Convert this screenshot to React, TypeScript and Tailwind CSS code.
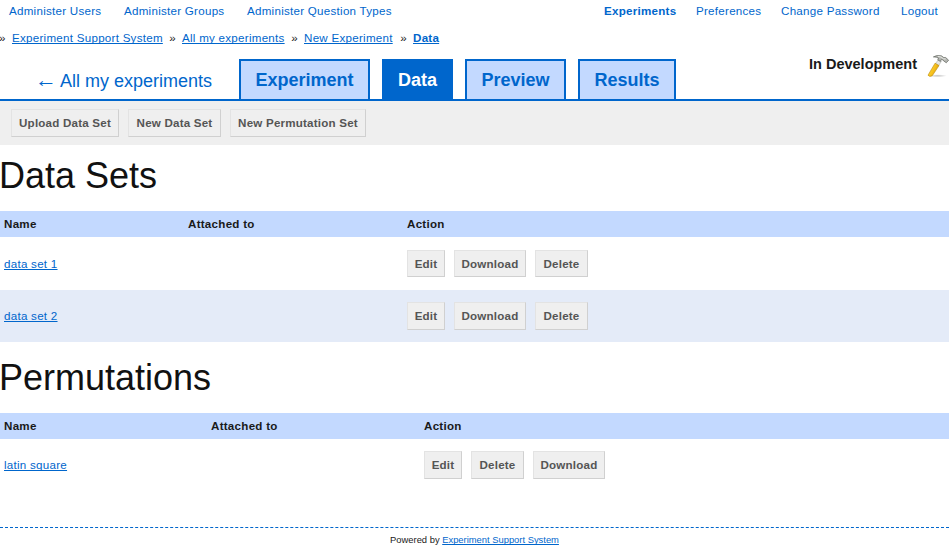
import type { ReactNode } from "react";

function Action({ children, className = "" }: { children: ReactNode; className?: string }) {
  return (
    <button
      className={`flex shrink-0 items-center justify-center whitespace-nowrap border border-t-[#e3e3e3] border-l-[#e3e3e3] border-r-[#d0d0d0] border-b-[#d0d0d0] bg-[#efefef] text-[11.6px] font-bold tracking-[0.2px] text-[#555] ${className}`}
    >
      {children}
    </button>
  );
}

function Link({ children, className = "" }: { children: ReactNode; className?: string }) {
  return (
    <a href="#" className={`text-[#0066cc] underline underline-offset-[1px] decoration-1 [text-decoration-skip-ink:none] ${className}`}>
      {children}
    </a>
  );
}

function Tab({ children, className = "" }: { children: ReactNode; className?: string }) {
  return (
    <a
      href="#"
      className={`flex h-[40px] shrink-0 items-center justify-center border-2 border-b-0 border-[#0066cc] text-[18px] font-bold ${className}`}
    >
      {children}
    </a>
  );
}

function Hammer() {
  return (
    <svg width="22" height="24" viewBox="0 0 22 24" className="shrink-0">
      <defs>
        <linearGradient id="handle" x1="0" y1="0.3" x2="1" y2="0.8">
          <stop offset="0" stopColor="#ffdf3c" />
          <stop offset="0.5" stopColor="#f6c01c" />
          <stop offset="1" stopColor="#cf9208" />
        </linearGradient>
        <radialGradient id="shade">
          <stop offset="0" stopColor="#999" stopOpacity="0.6" />
          <stop offset="1" stopColor="#999" stopOpacity="0" />
        </radialGradient>
      </defs>
      <ellipse cx="10.5" cy="21.8" rx="9.5" ry="1.5" fill="url(#shade)" />
      <path d="M11.4 5.5 L14.4 7.3 L11.6 11.6 L8.4 9.8 Z" fill="#e4e5e2" stroke="#a3a5a0" strokeWidth="0.5" />
      <path d="M8.1 9.2 L12 11.6 L5.2 21.8 Q2.6 23.3 1 21.2 Z" fill="url(#handle)" stroke="#b98708" strokeWidth="0.6" />
      <path
        d="M6.4 2.9 Q9.5 0.8 14.4 1.8 L16.8 3.6 L18.6 3.5 L21.6 6.2 L19.3 8.8 L16.6 6.9 L16.2 5.9 L14.2 5.6 L13.4 7.4 L10.8 5.9 L11.5 4 Q9.4 2.8 6.4 2.9 Z"
        fill="#b4b6b1"
        stroke="#62655f"
        strokeWidth="0.7"
      />
      <path d="M10.8 2.4 L14 3 L16.4 4.8 L18.6 5" fill="none" stroke="#f6f6f4" strokeWidth="0.8" />
    </svg>
  );
}

export default function App() {
  return (
    <div className="h-[556px] w-[949px] overflow-hidden bg-white font-['Liberation_Sans',Arial,sans-serif] text-[11.6px] leading-[14px] tracking-[0.26px] text-[#1a1a1a]">
      <nav className="flex h-[22px] items-center pl-[9px] whitespace-nowrap text-[#0066cc]">
        <a href="#" className="w-[115px]">Administer Users</a>
        <a href="#" className="w-[123px]">Administer Groups</a>
        <a href="#" className="w-[357px]">Administer Question Types</a>
        <a href="#" className="w-[92px] font-bold">Experiments</a>
        <a href="#" className="w-[85px]">Preferences</a>
        <a href="#" className="w-[120px]">Change Password</a>
        <a href="#">Logout</a>
      </nav>
      <div className="flex h-[32px] items-center whitespace-nowrap">
        <span className="w-[12px] -indent-px tracking-normal">»</span>
        <Link className="w-[151px]">Experiment Support System</Link>
        <span className="w-[19px] text-center">»</span>
        <Link className="w-[103px]">All my experiments</Link>
        <span className="w-[19px] text-center">»</span>
        <Link className="w-[90px]">New Experiment</Link>
        <span className="w-[19px] text-center">»</span>
        <Link className="font-bold">Data</Link>
      </div>
      <div className="flex h-[47px] items-end border-b-2 border-[#0066cc] tracking-normal">
        <a href="#" className="flex h-[40px] w-[239px] items-center whitespace-nowrap pt-[3px] pl-[35px] text-[18px] text-[#0066cc]">
          <span className="w-[25px] pb-[2px] font-['Liberation_Serif',serif] text-[22px]">←</span>
          All my experiments
        </a>
        <Tab className="mr-[12px] w-[131px] bg-[#c3d9ff] text-[#0066cc]">Experiment</Tab>
        <Tab className="mr-[12px] w-[71px] bg-[#0066cc] text-white">Data</Tab>
        <Tab className="mr-[12px] w-[101px] bg-[#c3d9ff] text-[#0066cc]">Preview</Tab>
        <Tab className="w-[98px] bg-[#c3d9ff] text-[#0066cc]">Results</Tab>
        <div className="ml-auto flex h-[45px] gap-[10px]">
          <span className="pt-[3px] text-[14.5px] leading-[14px] font-bold">In Development</span>
          <Hammer />
        </div>
      </div>
      <div className="flex h-[44px] items-center gap-[9px] bg-[#efefef] pl-[11px]">
        <Action className="h-[28px] w-[108px]">Upload Data Set</Action>
        <Action className="h-[28px] w-[93px]">New Data Set</Action>
        <Action className="h-[28px] w-[136px]">New Permutation Set</Action>
      </div>

      <h1 className="-ml-px h-[66px] pt-[10px] text-[36px] leading-[42px] tracking-normal text-[#111]">Data Sets</h1>
      <div className="grid h-[26px] grid-cols-[184px_219px_1fr] items-center bg-[#c3d9ff] pl-[4px] font-bold">
        <span>Name</span>
        <span>Attached to</span>
        <span>Action</span>
      </div>
      <div className="grid h-[53px] grid-cols-[403px_1fr] items-center pl-[4px]">
        <span><Link>data set 1</Link></span>
        <div className="flex gap-[9px]">
          <Action className="h-[27px] w-[38px]">Edit</Action>
          <Action className="h-[27px] w-[72px]">Download</Action>
          <Action className="h-[27px] w-[53px]">Delete</Action>
        </div>
      </div>
      <div className="grid h-[52px] grid-cols-[403px_1fr] items-center bg-[#e4ebf8] pl-[4px]">
        <span><Link>data set 2</Link></span>
        <div className="flex gap-[9px]">
          <Action className="h-[28px] w-[38px]">Edit</Action>
          <Action className="h-[28px] w-[72px]">Download</Action>
          <Action className="h-[28px] w-[53px]">Delete</Action>
        </div>
      </div>

      <h1 className="-ml-px h-[71px] pt-[15px] text-[36px] leading-[42px] tracking-normal text-[#111]">Permutations</h1>
      <div className="grid h-[26px] grid-cols-[207px_213px_1fr] items-center bg-[#c3d9ff] pl-[4px] font-bold">
        <span>Name</span>
        <span>Attached to</span>
        <span>Action</span>
      </div>
      <div className="grid h-[52px] grid-cols-[420px_1fr] items-center pl-[4px]">
        <span><Link>latin square</Link></span>
        <div className="flex gap-[9px]">
          <Action className="h-[28px] w-[38px]">Edit</Action>
          <Action className="h-[28px] w-[53px]">Delete</Action>
          <Action className="h-[28px] w-[72px]">Download</Action>
        </div>
      </div>

      <footer className="mt-[36px] border-t border-dashed border-[#0066cc] pt-[6px] text-center text-[9.4px] leading-[12px] tracking-normal">
        Powered by <Link>Experiment Support System</Link>
      </footer>
    </div>
  );
}
